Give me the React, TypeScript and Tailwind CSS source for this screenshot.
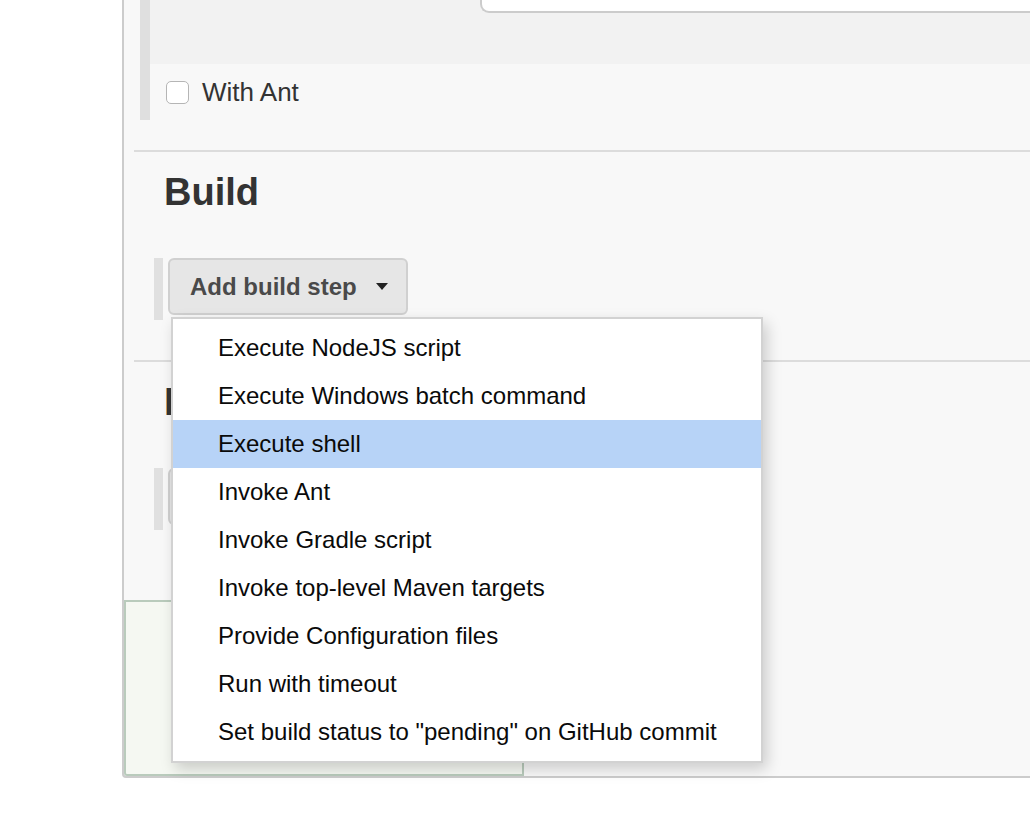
const font = { fontFamily: '"Liberation Sans", Arial, sans-serif' };

const buildSteps = [
  "Execute NodeJS script",
  "Execute Windows batch command",
  "Execute shell",
  "Invoke Ant",
  "Invoke Gradle script",
  "Invoke top-level Maven targets",
  "Provide Configuration files",
  "Run with timeout",
  'Set build status to "pending" on GitHub commit',
];

function Caret() {
  return (
    <svg width="12" height="7" viewBox="0 0 12 7" className="ml-[19px]">
      <polygon points="0,0 12,0 6,7" fill="#222" />
    </svg>
  );
}

function DropButton({ label }: { label: string }) {
  return (
    <div className="flex h-[57px] items-center rounded-[6px] border-2 border-[#d0d0d0] bg-[#e6e6e6] pl-[20px] pr-[18px] text-[24px] font-bold text-[#4a4a4a] whitespace-nowrap">
      {label}
      <Caret />
    </div>
  );
}

function Section({
  title,
  button,
  menu,
}: {
  title: string;
  button: string;
  menu?: boolean;
}) {
  return (
    <div>
      <div className="ml-[10px] h-[2px] bg-[#dcdcdc]" />
      <h2 className="mt-[18px] ml-[40px] h-[44px] text-[38px] leading-[44px] font-bold text-[#333]">
        {title}
      </h2>
      <div className="mt-[44px] ml-[30px] flex">
        <div className="h-[62px] w-[9px] bg-[#e0e0e0]" />
        <div className="relative ml-[5px]">
          <DropButton label={button} />
          {menu && <BuildStepMenu />}
        </div>
      </div>
    </div>
  );
}

function BuildStepMenu() {
  return (
    <div className="absolute left-[3px] top-[59px] z-10 w-[592px] border-2 border-[#d2d2d2] bg-white py-[5px] shadow-[4px_6px_14px_rgba(0,0,0,0.18)]">
      {buildSteps.map((step, i) => (
        <div
          key={step}
          className={
            "flex h-[48px] items-center pl-[45px] text-[24px] text-[#0a0a0a] whitespace-nowrap " +
            (i === 2 ? "bg-[#b7d3f7]" : "")
          }
        >
          {step}
        </div>
      ))}
    </div>
  );
}

export default function App() {
  return (
    <div className="flex h-[828px] w-[1030px] overflow-hidden bg-white" style={font}>
      <div className="ml-[122px] flex h-[778px] flex-1 flex-col rounded-bl-[4px] border-b-2 border-l-2 border-[#cccccc] bg-[#f8f8f8]">
        {/* tail of the previous block */}
        <div className="ml-[16px] flex h-[120px]">
          <div className="w-[10px] bg-[#dfdfdf]" />
          <div className="flex flex-1 flex-col">
            <div className="flex h-[64px] bg-[#f2f2f2]">
              <div className="w-[330px]" />
              <div className="h-[13px] flex-1 rounded-bl-[9px] border-b-2 border-l-2 border-[#cccccc] bg-white" />
            </div>
            <label className="flex h-[56px] items-center pl-[16px] text-[26px] text-[#333]">
              <span className="h-[23px] w-[23px] rounded-[5px] border border-[#b5b5b5] bg-white" />
              <span className="ml-[13px]">With Ant</span>
            </label>
          </div>
        </div>

        <div className="mt-[30px]">
          <Section title="Build" button="Add build step" menu />
        </div>
        <div className="mt-[40px]">
          <Section title="Post-build Actions" button="Add post-build action" />
        </div>

        <div className="mt-auto h-[176px] w-[400px] rounded-bl-[3px] border-2 border-[#b9cbbc] bg-[#f5f8f2]" />
      </div>
    </div>
  );
}
